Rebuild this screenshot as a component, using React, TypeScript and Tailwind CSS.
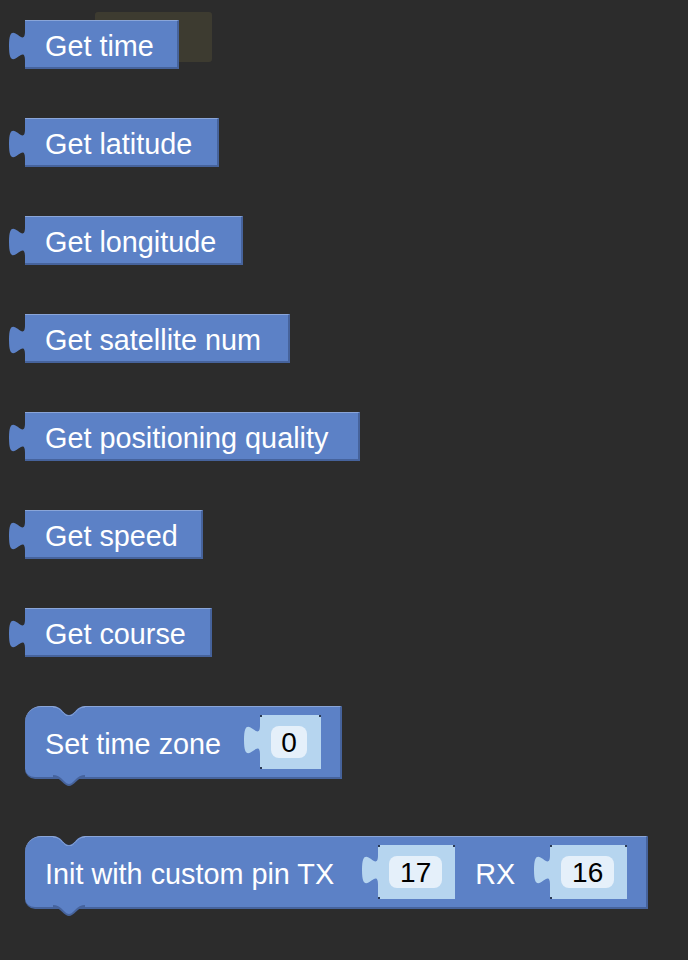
import type { ReactNode } from "react";

const BLOCK = "#5c81c6";
const SLOT = "#b6d5ef";
const BG = "#2c2c2c";

const getBlocks = [
  { label: "Get time", width: "w-[154px]" },
  { label: "Get latitude", width: "w-[194px]" },
  { label: "Get longitude", width: "w-[218px]" },
  { label: "Get satellite num", width: "w-[265px]" },
  { label: "Get positioning quality", width: "w-[335px]" },
  { label: "Get speed", width: "w-[178px]" },
  { label: "Get course", width: "w-[187px]" },
];

// puzzle tab on the left of a value block (Blockly output connection)
function OutputTab({ color }: { color: string }) {
  return (
    <svg className="absolute left-[-16px] top-[10px]" width="19" height="30" viewBox="0 0 19 30">
      <path d="M19,0 L16,0 c0,20 -16,-16 -16,15 s16,-5 16,15 L19,30 Z" fill={color} />
    </svg>
  );
}

// notch cut into the top of a statement block
function TopNotch() {
  return (
    <svg className="absolute left-[28px] top-[-1px]" width="32" height="10" viewBox="0 0 32 10">
      <path d="M0,0 C9,0 10,9 16,9 C22,9 23,0 32,0 Z" fill={BG} />
      <path d="M0,1 C9,1 10,10 16,10 C22,10 23,1 32,1" fill="none" stroke="#8aa5d8" strokeWidth="1" />
    </svg>
  );
}

// tab hanging under a statement block
function BottomTab() {
  return (
    <svg className="absolute left-[28px] top-[calc(100%-2px)]" width="32" height="12" viewBox="0 0 32 12">
      <path d="M0,0 L0,1 C9,1 10,10 16,10 C22,10 23,1 32,1 L32,0 Z" fill={BLOCK} />
      <path d="M0,1 C9,1 10,10 16,10 C22,10 23,1 32,1" fill="none" stroke="#46639c" strokeWidth="2" />
    </svg>
  );
}

function Slot({ value, width, field }: { value: string; width: string; field: string }) {
  return (
    <div className={`relative h-[54px] ${width} bg-[#b6d5ef] flex items-center pl-[11px]`}>
      <OutputTab color={SLOT} />
      <span className="absolute left-0 top-0 w-[2px] h-[2px] bg-[#2b3a55]" />
      <span className="absolute left-0 bottom-0 w-[2px] h-[2px] bg-[#2b3a55]" />
      <span className="absolute right-0 top-0 w-[2px] h-[2px] bg-[#2b3a55]" />
      <div
        className={`${field} h-[32px] rounded-[8px] bg-[#e5f0fa] flex items-center justify-center pt-[2px] text-black text-[28px] leading-none`}
      >
        {value}
      </div>
    </div>
  );
}

function StatementBlock({ width, children }: { width: string; children: ReactNode }) {
  return (
    <div
      className={`relative ${width} h-[73px] bg-[#5c81c6] rounded-tl-[16px] rounded-bl-[10px] border-t border-t-[#8aa5d8] border-r-2 border-b-2 border-r-[#46639c] border-b-[#46639c] flex items-center pl-[20px]`}
    >
      <TopNotch />
      <BottomTab />
      {children}
    </div>
  );
}

export default function App() {
  return (
    <div
      className="relative min-h-[960px] w-[688px] bg-[#2c2c2c] text-white overflow-hidden"
      style={{ fontFamily: '"Liberation Sans", Arial, sans-serif' }}
    >
      {/* faint shadow of a dragged block */}
      <div className="absolute left-[95px] top-[12px] w-[117px] h-[50px] bg-[#3d3b30] rounded-[3px]" />

      <div className="relative flex flex-col items-start gap-[49px] pt-[20px] pl-[25px]">
        {getBlocks.map((b) => (
          <div
            key={b.label}
            className={`relative ${b.width} h-[49px] bg-[#5c81c6] border-t border-t-[#8aa5d8] border-r-2 border-b-2 border-r-[#46639c] border-b-[#46639c] flex items-center pl-[20px] pt-[6px] text-[28.8px] whitespace-nowrap`}
          >
            <OutputTab color={BLOCK} />
            {b.label}
          </div>
        ))}

        <StatementBlock width="w-[317px]">
          <span className="pt-[5px] text-[28.8px] whitespace-nowrap">Set time zone</span>
          <div className="ml-[39px]">
            <Slot value="0" width="w-[61px]" field="w-[36px]" />
          </div>
        </StatementBlock>

        <div className="mt-[8px]">
          <StatementBlock width="w-[623px]">
            <span className="pt-[5px] text-[28.8px] whitespace-nowrap">Init with custom pin TX</span>
            <div className="ml-[44px]">
              <Slot value="17" width="w-[77px]" field="w-[53px]" />
            </div>
            <span className="ml-[20px] pt-[5px] text-[28.8px]">RX</span>
            <div className="ml-[35px]">
              <Slot value="16" width="w-[77px]" field="w-[53px]" />
            </div>
          </StatementBlock>
        </div>
      </div>
    </div>
  );
}
